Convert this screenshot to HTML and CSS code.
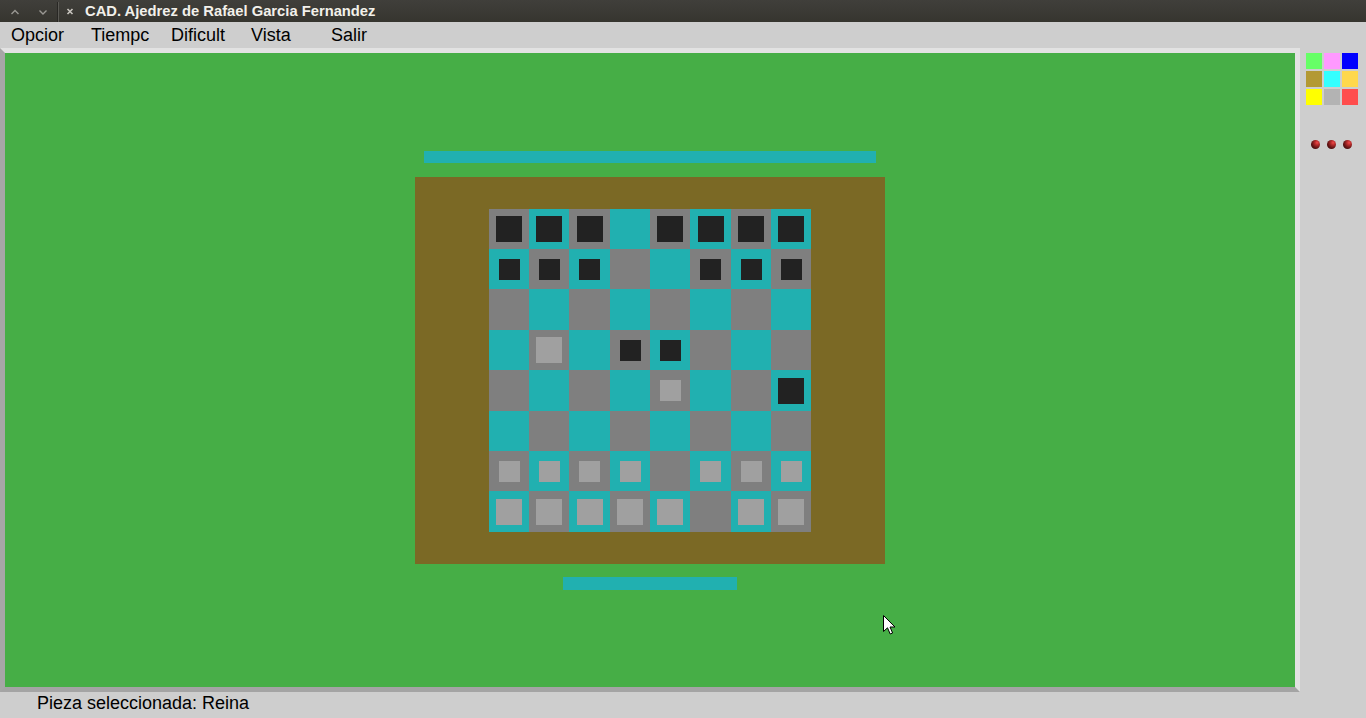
FILE: index.html
```
<!DOCTYPE html>
<html lang="es">
<head>
<meta charset="utf-8">
<title>CAD. Ajedrez de Rafael Garcia Fernandez</title>
<link rel="stylesheet" href="styles.css">
</head>
<body>
<div class="titlebar">
  <svg class="wbtns" width="80" height="22" viewBox="0 0 80 22">
    <path d="M11.5 14 L15 10.5 L18.5 14" fill="none" stroke="#9a9893" stroke-width="1.4"/>
    <path d="M39.5 10.5 L43 14 L46.5 10.5" fill="none" stroke="#9a9893" stroke-width="1.4"/>
    <line x1="57.5" y1="2" x2="57.5" y2="22" stroke="#282724" stroke-width="1"/>
    <line x1="58.5" y1="2" x2="58.5" y2="22" stroke="#5a5954" stroke-width="1"/>
    <path d="M67.5 9 L72.5 14 M72.5 9 L67.5 14" fill="none" stroke="#c8c5bf" stroke-width="1.6"/>
  </svg>
  <span class="title">CAD. Ajedrez de Rafael Garcia Fernandez</span>
</div>
<div class="menubar">
  <div class="menu-item">Opcior</div>
  <div class="menu-item">Tiempc</div>
  <div class="menu-item">Dificult</div>
  <div class="menu-item">Vista</div>
  <div class="menu-item">Salir</div>
</div>
<div class="main">
  <div class="frame">
    <div class="bar-top"></div>
    <div class="wood">
      <div class="board">
        <div class="sq g"><i class="pc dk big"></i></div><div class="sq c"><i class="pc dk big"></i></div><div class="sq g"><i class="pc dk big"></i></div><div class="sq c"></div><div class="sq g"><i class="pc dk big"></i></div><div class="sq c"><i class="pc dk big"></i></div><div class="sq g"><i class="pc dk big"></i></div><div class="sq c"><i class="pc dk big"></i></div>
        <div class="sq c"><i class="pc dk pawn"></i></div><div class="sq g"><i class="pc dk pawn"></i></div><div class="sq c"><i class="pc dk pawn"></i></div><div class="sq g"></div><div class="sq c"></div><div class="sq g"><i class="pc dk pawn"></i></div><div class="sq c"><i class="pc dk pawn"></i></div><div class="sq g"><i class="pc dk pawn"></i></div>
        <div class="sq g"></div><div class="sq c"></div><div class="sq g"></div><div class="sq c"></div><div class="sq g"></div><div class="sq c"></div><div class="sq g"></div><div class="sq c"></div>
        <div class="sq c"></div><div class="sq g"><i class="pc lt big"></i></div><div class="sq c"></div><div class="sq g"><i class="pc dk pawn"></i></div><div class="sq c"><i class="pc dk pawn"></i></div><div class="sq g"></div><div class="sq c"></div><div class="sq g"></div>
        <div class="sq g"></div><div class="sq c"></div><div class="sq g"></div><div class="sq c"></div><div class="sq g"><i class="pc lt pawn"></i></div><div class="sq c"></div><div class="sq g"></div><div class="sq c"><i class="pc dk big"></i></div>
        <div class="sq c"></div><div class="sq g"></div><div class="sq c"></div><div class="sq g"></div><div class="sq c"></div><div class="sq g"></div><div class="sq c"></div><div class="sq g"></div>
        <div class="sq g"><i class="pc lt pawn"></i></div><div class="sq c"><i class="pc lt pawn"></i></div><div class="sq g"><i class="pc lt pawn"></i></div><div class="sq c"><i class="pc lt pawn"></i></div><div class="sq g"></div><div class="sq c"><i class="pc lt pawn"></i></div><div class="sq g"><i class="pc lt pawn"></i></div><div class="sq c"><i class="pc lt pawn"></i></div>
        <div class="sq c"><i class="pc lt big"></i></div><div class="sq g"><i class="pc lt big"></i></div><div class="sq c"><i class="pc lt big"></i></div><div class="sq g"><i class="pc lt big"></i></div><div class="sq c"><i class="pc lt big"></i></div><div class="sq g"></div><div class="sq c"><i class="pc lt big"></i></div><div class="sq g"><i class="pc lt big"></i></div>
      </div>
    </div>
    <div class="bar-bottom"></div>
  </div>
  <div class="sidebar">
    <div class="palette">
      <span class="sw sw1"></span><span class="sw sw2"></span><span class="sw sw3"></span>
      <span class="sw sw4"></span><span class="sw sw5"></span><span class="sw sw6"></span>
      <span class="sw sw7"></span><span class="sw sw8"></span><span class="sw sw9"></span>
    </div>
    <div class="balls">
      <span class="ball"></span><span class="ball"></span><span class="ball"></span>
    </div>
  </div>
</div>
<div class="statusbar">Pieza seleccionada: Reina</div>
<svg class="cursor" width="14" height="22" viewBox="0 0 14 22">
  <path d="M0.5 0.5 L0.5 16.5 L4.5 12.8 L7.2 19 L9.6 18 L7 12 L12 12 Z" fill="#fff" stroke="#000" stroke-width="1"/>
</svg>
</body>
</html>
```
FILE: styles.css
```
html, body {
  margin: 0;
  padding: 0;
}
body {
  width: 1366px;
  height: 718px;
  overflow: hidden;
  background: #cecece;
  font-family: "Liberation Sans", Arial, sans-serif;
  position: relative;
}
.titlebar {
  height: 22px;
  background: linear-gradient(#403f3b, #36352f);
  display: flex;
  align-items: center;
}
.wbtns {
  display: block;
  flex: none;
  width: 80px;
  height: 22px;
}
.title {
  margin-left: 5px;
  color: #f2f0ea;
  font-weight: bold;
  font-size: 14.75px;
  line-height: 22px;
  white-space: nowrap;
}
.menubar {
  height: 26px;
  display: flex;
  padding-left: 11px;
  font-size: 18px;
  line-height: 26px;
  color: #000;
}
.menu-item {
  width: 80px;
  flex: none;
  white-space: nowrap;
}
.main {
  display: flex;
  height: 644px;
}
.frame {
  width: 1290px;
  height: 536px;
  padding-top: 98px;
  border-style: solid;
  border-width: 5px;
  border-color: #e2e2e2 #e2e2e2 #a4a4a4 #a6a6a6;
  background: #46ae46;
  display: flex;
  flex-direction: column;
  align-items: center;
  flex: none;
}
.bar-top {
  width: 452px;
  height: 12px;
  background: #21b0b0;
}
.wood {
  margin-top: 14px;
  padding: 32px 74px;
  background: #7b6925;
}
.board {
  display: grid;
  grid-template-columns: 40px 40px 41px 40px 40px 41px 40px 40px;
  grid-template-rows: 40px 40px 41px 40px 41px 40px 40px 41px;
}
.sq {
  display: flex;
  align-items: center;
  justify-content: center;
}
.sq.g { background: #7f7f7f; }
.sq.c { background: #21b0b0; }
.pc { display: block; }
.pc.big { width: 26px; height: 26px; }
.pc.pawn { width: 21px; height: 21px; }
.pc.dk { background: #222222; }
.pc.lt { background: #a0a0a0; }
.bar-bottom {
  margin-top: 13px;
  width: 174px;
  height: 13px;
  background: #21b0b0;
}
.sidebar {
  flex: 1;
  padding: 5px 0 0 6px;
}
.palette {
  display: grid;
  grid-template-columns: repeat(3, 16px);
  grid-auto-rows: 16px;
  gap: 2px;
}
.sw { display: block; }
.sw1 { background: #66ff66; }
.sw2 { background: #ff99ff; }
.sw3 { background: #0000ff; }
.sw4 { background: #b39933; }
.sw5 { background: #33ffff; }
.sw6 { background: #ffd84d; }
.sw7 { background: #ffff00; }
.sw8 { background: #b3b3b3; }
.sw9 { background: #ff4d4d; }
.balls {
  display: flex;
  gap: 7px;
  margin-top: 35px;
  padding-left: 5px;
}
.ball {
  width: 9px;
  height: 9px;
  border-radius: 50%;
  background: radial-gradient(circle at 68% 30%, #f24a4a 0, #b82c2c 25%, #6e1717 55%, #2e0707 90%);
}
.statusbar {
  height: 26px;
  padding-left: 37px;
  font-size: 18px;
  line-height: 22px;
  color: #000;
  white-space: nowrap;
}
.cursor {
  position: absolute;
  left: 883px;
  top: 615px;
}
```
